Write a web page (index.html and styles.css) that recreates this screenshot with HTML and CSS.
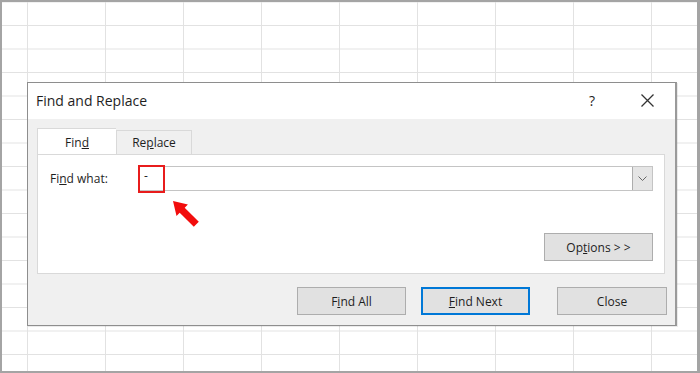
FILE: index.html
```html
<!DOCTYPE html>
<html>
<head>
  <meta charset="UTF-8">
  <title>Find and Replace</title>
  <link rel="stylesheet" href="styles.css">
</head>
<body>

<div class="sheet">
  <div class="dialog">
    <div class="titlebar">
      <span class="title">Find and Replace</span>
      <span class="help">?</span>
      <svg class="close-x" width="13" height="13" viewBox="0 0 13 13">
        <path d="M0.5 0.5 L12.5 12.5 M12.5 0.5 L0.5 12.5" stroke="#333" stroke-width="1.3" fill="none"/>
      </svg>
    </div>

    <div class="content">
      <div class="tabs">
        <div class="tab active">Fin<u>d</u></div>
        <div class="tab">Re<u>p</u>lace</div>
      </div>

      <div class="panel">
        <div class="find-row">
          <label class="label">Fi<u>n</u>d what:</label>
          <div class="combo">
            <span class="value">-</span>
            <div class="drop">
              <svg width="9" height="5" viewBox="0 0 9 5">
                <path d="M0.5 0.5 L4.5 4.5 L8.5 0.5" stroke="#666" stroke-width="1" fill="none"/>
              </svg>
            </div>
          </div>
          <div class="highlight"></div>
        </div>

        <svg class="arrow" width="30" height="30" viewBox="0 0 30 30">
          <polygon fill="#f20d0d" points="1,1 15.9,4.5 12.7,7.7 26.8,21.8 21.8,26.8 7.7,12.7 4.5,15.9"/>
        </svg>

        <div class="options-row">
          <button class="btn">Op<u>t</u>ions &gt; &gt;</button>
        </div>
      </div>

      <div class="actions">
        <button class="btn">F<u>i</u>nd All</button>
        <button class="btn primary"><u>F</u>ind Next</button>
        <button class="btn close-btn">Close</button>
      </div>
    </div>
  </div>
</div>

</body>
</html>
```

FILE: styles.css
```css
body {
  margin: 0;
  font-family: 'Open Sans', 'Noto Sans', sans-serif;
  color: #1e1e1e;
}
.sheet {
  width: 700px;
  height: 373px;
  box-sizing: border-box;
  border: 2px solid #a4a4a4;
  border-right-width: 3px;
  padding: 80px 0 0 25px;
  background-color: #fff;
  background-image:
    linear-gradient(to right, #e2e2e2 1px, transparent 1px),
    linear-gradient(to bottom, #e2e2e2 1px, transparent 1px);
  background-size: 78px 100%, 100% 23.5px;
  background-position: 25px 0, 0 23px;
}
.dialog {
  width: 650px;
  height: 244px;
  box-sizing: border-box;
  border: 1px solid #8e8e8e;
  border-right: 2px solid #9a9a9a;
  background: #f0f0f0;
  box-shadow: 1px 1px 0 rgba(0,0,0,0.08);
}
.titlebar {
  height: 36px;
  background: #fff;
  display: flex;
  align-items: center;
  padding-left: 8px;
}
.title {
  font-size: 14px;
  flex: 1;
  margin-top: -2px;
}
.help {
  font-size: 14px;
  margin-right: 46px;
  margin-top: -2px;
}
.close-x {
  margin-right: 21px;
  margin-top: -2px;
}
.content {
  padding: 9px 10px 0 9px;
}
.tabs {
  display: flex;
  align-items: flex-end;
  height: 26px;
}
.tab {
  box-sizing: border-box;
  font-size: 12px;
  text-align: center;
  border: 1px solid #d9d9d9;
  border-bottom: none;
  background: #f0f0f0;
  width: 76px;
  height: 24px;
  line-height: 24px;
}
.tab.active {
  width: 79px;
  height: 27px;
  line-height: 28px;
  background: #fff;
  border-right: none;
  margin-bottom: -1px;
  position: relative;
}
.panel {
  position: relative;
  box-sizing: border-box;
  height: 120px;
  background: #fff;
  border: 1px solid #d9d9d9;
  padding: 11px 11px 0 12px;
}
.find-row {
  position: relative;
  display: flex;
  align-items: center;
}
.label {
  font-size: 12px;
  width: 89px;
}
.combo {
  flex: 1;
  height: 25px;
  box-sizing: border-box;
  border: 1px solid #c4c4c4;
  display: flex;
  align-items: center;
}
.value {
  flex: 1;
  font-size: 12px;
  padding-left: 4px;
  margin-top: -6px;
}
.drop {
  width: 20px;
  height: 23px;
  box-sizing: border-box;
  background: #e5e5e5;
  border-left: 1px solid #adadad;
  display: flex;
  align-items: center;
  justify-content: center;
}
.highlight {
  position: absolute;
  left: 88px;
  top: -1px;
  width: 27px;
  height: 28px;
  box-sizing: border-box;
  border: 2px solid #e81c1c;
}
.arrow {
  position: absolute;
  left: 134px;
  top: 45px;
}
.options-row {
  display: flex;
  justify-content: flex-end;
  margin-top: 42px;
}
.btn {
  font-family: 'Open Sans', 'Noto Sans', sans-serif;
  font-size: 12px;
  color: #1e1e1e;
  width: 109px;
  height: 28px;
  box-sizing: border-box;
  background: #e1e1e1;
  border: 1px solid #adadad;
  padding: 0;
}
.btn.primary {
  border: 2px solid #0078d7;
}
.actions {
  display: flex;
  justify-content: flex-end;
  gap: 15px;
  margin-top: 13px;
  margin-right: -2px;
}
.close-btn {
  width: 110px;
  margin-left: 12px;
}
```
